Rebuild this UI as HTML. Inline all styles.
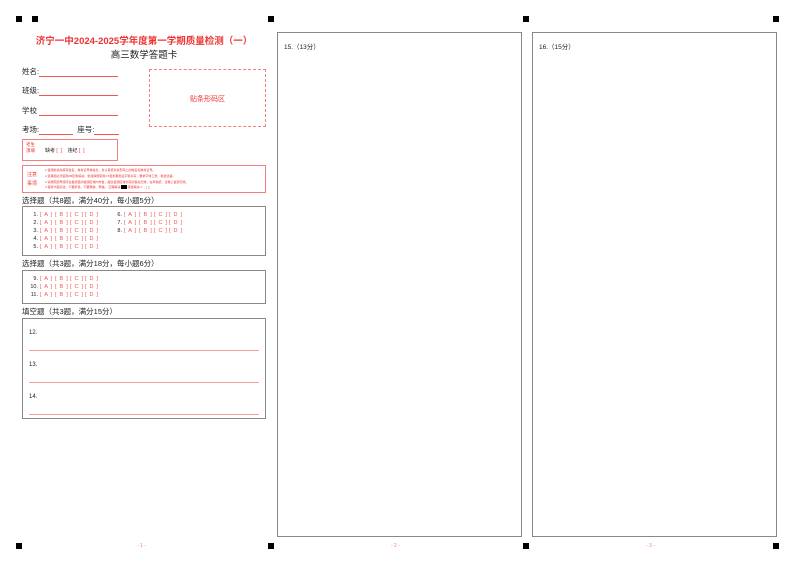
<!DOCTYPE html>
<html><head><meta charset="utf-8"><style>
*{margin:0;padding:0;box-sizing:border-box}
body{width:800px;height:566px;background:#fff;position:relative;overflow:hidden;font-family:"Liberation Sans","Noto Sans CJK SC",sans-serif;color:#222}
.a{position:absolute}
.m{position:absolute;width:6px;height:6px;background:#000}
.box{position:absolute;border:1px solid #888}
.red{color:#e33}
.fl{position:absolute;font-size:7.5px}
.ul{display:inline-block;border-bottom:1px solid #e55;vertical-align:bottom}
.opt{font-size:5.5px;line-height:8px;white-space:nowrap}
.opt i{font-style:normal;display:inline-block;width:9px;text-align:right;margin-right:2px}
.opt b{font-weight:normal;color:#e55;display:inline-block;width:15px;word-spacing:1.5px}
.hl{position:absolute;left:6px;right:6px;border-top:1px solid #f0a0a0}
.pg{position:absolute;top:543px;font-size:5px;color:#f08080}
</style></head><body>
<div class="m" style="left:16px;top:16px"></div><div class="m" style="left:32px;top:16px"></div>
<div class="m" style="left:268px;top:16px"></div><div class="m" style="left:523px;top:16px"></div><div class="m" style="left:773px;top:16px"></div>
<div class="m" style="left:16px;top:543px"></div><div class="m" style="left:268px;top:543px"></div><div class="m" style="left:523px;top:543px"></div><div class="m" style="left:773px;top:543px"></div>

<div class="a red" style="left:22px;width:244px;top:33px;text-align:center;font-size:9.5px;font-weight:bold">济宁一中2024-2025学年度第一学期质量检测（一）</div>
<div class="a" style="left:22px;width:244px;top:47px;text-align:center;font-size:9.5px">高三数学答题卡</div>

<div class="fl" style="left:22px;top:66px">姓名:<span class="ul" style="width:79px;height:8px"></span></div>
<div class="fl" style="left:22px;top:85px">班级:<span class="ul" style="width:79px;height:8px"></span></div>
<div class="fl" style="left:22px;top:105px">学校 <span class="ul" style="width:79px;height:8px"></span></div>
<div class="fl" style="left:22px;top:124px">考场:<span class="ul" style="width:34px;height:8px"></span>&nbsp;&nbsp;座号:<span class="ul" style="width:25px;height:8px"></span></div>

<div class="a" style="left:149px;top:69px;width:117px;height:58px;border:1px dashed #f08080"></div>
<div class="a red" style="left:149px;top:94px;width:117px;text-align:center;font-size:7px">贴条形码区</div>

<div class="a" style="left:22px;top:139px;width:96px;height:22px;border:1px solid #f08080"></div>
<div class="a red" style="left:26px;top:142px;font-size:4.5px;line-height:6px">考生<br>须填</div>
<div class="a" style="left:45px;top:147px;font-size:5px">缺考 <span class="red">[ &nbsp;]</span> &nbsp;&nbsp;&nbsp;违纪 <span class="red">[ &nbsp;]</span></div>

<div class="a" style="left:22px;top:165px;width:244px;height:28px;border:1px solid #f08080"></div>
<div class="a red" style="left:27px;top:171px;font-size:5px;line-height:9px">注意<br>事项</div>
<div class="a red" style="left:45px;top:168px;font-size:3px;line-height:5.8px;white-space:nowrap">1.答题前请先填写姓名、准考证号等信息，并认真核对条形码上的姓名和准考证号。<br>2.选择题必须使用2B铅笔填涂；非选择题使用0.5毫米黑色签字笔书写，要求字体工整、笔迹清楚。<br>3.请按照题号顺序在各题目的答题区域内作答，超出答题区域书写的答案无效，在草稿纸、试卷上答题无效。<br>4.保持卡面清洁，不要折叠、不要弄破、弄皱。 正确填涂 <span style="background:#000;color:#000">■■■</span>  错误填涂 ✔ _ [ ◻</div>

<div class="a" style="left:22px;top:195px;font-size:7.5px">选择题（共8题，满分40分，每小题5分）</div>
<div class="box" style="left:22px;top:206px;width:244px;height:50px"></div>
<div class="a opt" style="left:29px;top:211px">
<div><i>1.</i><b>[ A ]</b><b>[ B ]</b><b>[ C ]</b><b>[ D ]</b></div>
<div><i>2.</i><b>[ A ]</b><b>[ B ]</b><b>[ C ]</b><b>[ D ]</b></div>
<div><i>3.</i><b>[ A ]</b><b>[ B ]</b><b>[ C ]</b><b>[ D ]</b></div>
<div><i>4.</i><b>[ A ]</b><b>[ B ]</b><b>[ C ]</b><b>[ D ]</b></div>
<div><i>5.</i><b>[ A ]</b><b>[ B ]</b><b>[ C ]</b><b>[ D ]</b></div></div>
<div class="a opt" style="left:113px;top:211px">
<div><i>6.</i><b>[ A ]</b><b>[ B ]</b><b>[ C ]</b><b>[ D ]</b></div>
<div><i>7.</i><b>[ A ]</b><b>[ B ]</b><b>[ C ]</b><b>[ D ]</b></div>
<div><i>8.</i><b>[ A ]</b><b>[ B ]</b><b>[ C ]</b><b>[ D ]</b></div></div>

<div class="a" style="left:22px;top:258px;font-size:7.5px">选择题（共3题，满分18分，每小题6分）</div>
<div class="box" style="left:22px;top:270px;width:244px;height:34px"></div>
<div class="a opt" style="left:29px;top:275px">
<div><i>9.</i><b>[ A ]</b><b>[ B ]</b><b>[ C ]</b><b>[ D ]</b></div>
<div><i>10.</i><b>[ A ]</b><b>[ B ]</b><b>[ C ]</b><b>[ D ]</b></div>
<div><i>11.</i><b>[ A ]</b><b>[ B ]</b><b>[ C ]</b><b>[ D ]</b></div></div>

<div class="a" style="left:22px;top:306px;font-size:7.5px">填空题（共3题，满分15分）</div>
<div class="box" style="left:22px;top:318px;width:244px;height:101px">
<div class="a" style="left:6px;top:11px;font-size:6px">12.</div><div class="hl" style="top:31px"></div>
<div class="a" style="left:6px;top:43px;font-size:6px">13.</div><div class="hl" style="top:63px"></div>
<div class="a" style="left:6px;top:75px;font-size:6px">14.</div><div class="hl" style="top:95px"></div>
</div>

<div class="box" style="left:277px;top:32px;width:245px;height:505px"><div class="a" style="left:6px;top:8px;font-size:6.5px">15.（13分）</div></div>
<div class="box" style="left:532px;top:32px;width:245px;height:505px"><div class="a" style="left:6px;top:8px;font-size:6.5px">16.（15分）</div></div>

<div class="pg" style="left:137px">- 1 -</div>
<div class="pg" style="left:391px">- 2 -</div>
<div class="pg" style="left:646px">- 3 -</div>
</body></html>
